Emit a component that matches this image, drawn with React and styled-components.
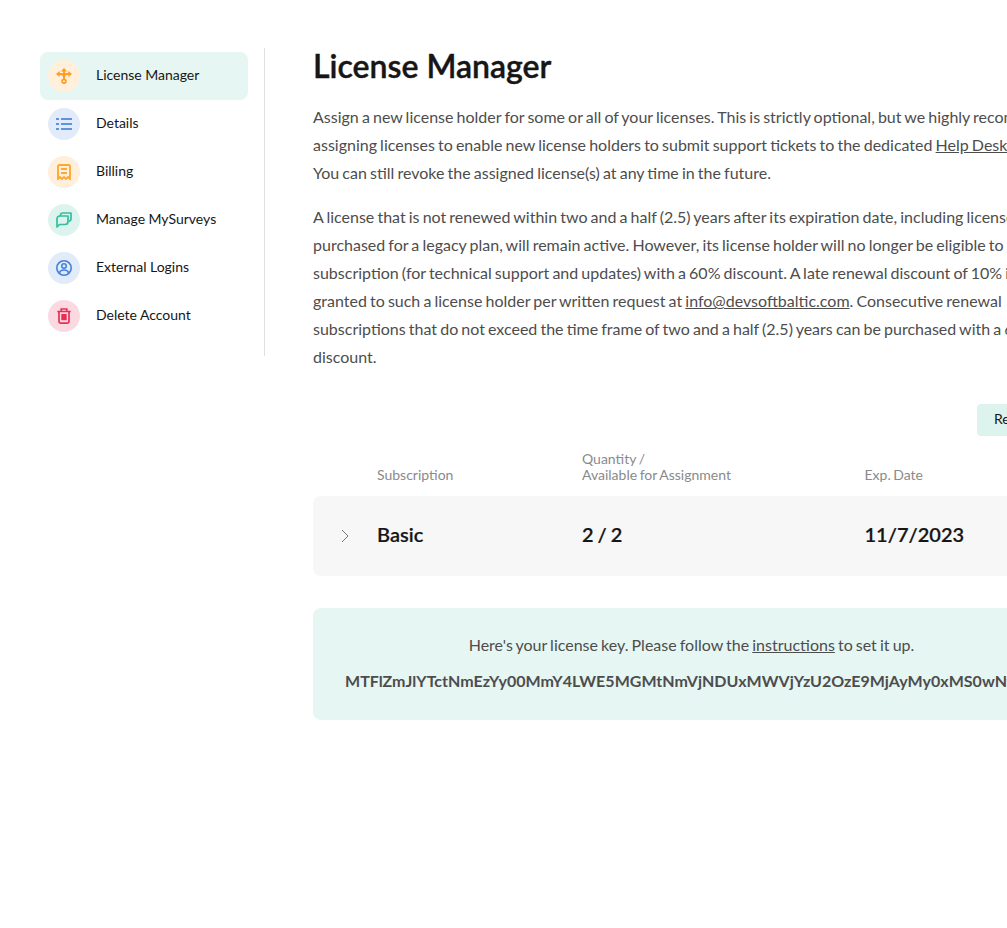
import React from "react";
import styled, { createGlobalStyle } from "styled-components";

const GlobalStyle = createGlobalStyle`
  * { box-sizing: border-box; }
  html, body { margin: 0; padding: 0; overflow: hidden; background: #fff; }
  body { font-family: Lato, "Liberation Sans", sans-serif; color: #161616; }
`;

const Page = styled.div`
  display: flex;
  align-items: flex-start;
  width: 1070px;
  min-height: 928px;
  padding: 48px 0 0 40px;
`;

const Sidebar = styled.nav`
  flex: none;
  width: 225px;
  height: 308px;
  padding: 4px 16px 0 0;
  border-right: 1px solid #e0e0e0;
`;

const NavItem = styled.a`
  display: flex;
  align-items: center;
  gap: 16px;
  height: 48px;
  padding: 0 8px;
  border-radius: 8px;
  background: ${(p) => (p.$active ? "#e6f6f3" : "transparent")};
`;

const IconCircle = styled.span`
  flex: none;
  display: flex;
  align-items: center;
  justify-content: center;
  width: 32px;
  height: 32px;
  border-radius: 50%;
  background: ${(p) => p.$bg};
  color: ${(p) => p.$fg};
`;

const NavLabel = styled.span`
  padding-bottom: 2px;
  font-size: 14px;
  line-height: 20px;
  word-spacing: -0.2px;
  white-space: nowrap;
`;

const Main = styled.main`
  flex: none;
  width: 757px;
  margin-left: 48px;
`;

const Title = styled.h1`
  margin: 0 0 19px;
  font-size: 32px;
  font-weight: 600;
  line-height: 36px;
  -webkit-text-stroke: 0.4px currentColor;
`;

const Paragraph = styled.p`
  margin: 0 0 16px;
  font-size: 16px;
  line-height: 28px;
  word-spacing: -0.98px;
  color: #4d4d4d;
  white-space: nowrap;
`;

const Link = styled.a`
  text-decoration: underline;
`;

const Actions = styled.div`
  display: flex;
  justify-content: flex-end;
  margin-top: 33px;
`;

const Button = styled.button`
  width: 93px;
  height: 32px;
  padding: 0 0 2px 17px;
  border: 0;
  border-radius: 4px;
  background: #ddf4ee;
  color: #161616;
  font: 14px/20px Lato, sans-serif;
  text-align: left;
`;

const GridRow = styled.div`
  display: grid;
  grid-template-columns: 64px 205px 282.5px 1fr;
`;

const TableHead = styled(GridRow)`
  align-items: end;
  margin-top: 15px;
  padding-bottom: 13px;
  font-size: 14px;
  line-height: 16px;
  word-spacing: -1px;
  color: #8a8a8a;
`;

const TableRow = styled(GridRow)`
  align-items: center;
  height: 80px;
  border-radius: 8px;
  background: #f7f7f7;
  font-size: 20px;
  font-weight: 600;
  line-height: 28px;
  word-spacing: -1px;
  -webkit-text-stroke: 0.2px currentColor;
`;

const Cell = styled.span`
  padding-bottom: 4px;
`;

const Toggle = styled.span`
  display: flex;
  justify-content: center;
  color: #777;
`;

const KeyPanel = styled.section`
  height: 112px;
  margin-top: 32px;
  padding: 23px 32px;
  border-radius: 8px;
  background: #e6f6f3;
  color: #4d4d4d;
  font-size: 16px;
  line-height: 28px;
  word-spacing: -1px;
  white-space: nowrap;
`;

const KeyHint = styled.div`
  text-align: center;
`;

const KeyValue = styled.div`
  margin-top: 8px;
  font-weight: 700;
  letter-spacing: 0.02px;
`;

const Svg = ({ children }) => (
  <svg width="16" height="16" viewBox="0 0 16 16" fill="none" stroke="currentColor" strokeWidth="2">
    {children}
  </svg>
);

const LicenseIcon = () => (
  <Svg>
    <path d="M8 3v8M2.500 6h2.200C6.500 6 8 7.200 8 9M13.500 6h-2.200C9.500 6 8 7.200 8 9" strokeWidth="1.900" />
    <path d="M8 0l3.200 3.600H4.800zM0 6l3.600-3v6zM16 6l-3.600-3v6z" fill="currentColor" stroke="none" />
    <circle cx="8" cy="13.200" r="1.900" strokeWidth="1.700" />
  </Svg>
);

const ListIcon = () => (
  <Svg>
    <path d="M0 3h3M5 3h11M0 8h3M5 8h11M0 13h3M5 13h11" />
  </Svg>
);

const BillIcon = () => (
  <Svg>
    <path d="M2 15V2.500Q2 1 3.500 1h9Q14 1 14 2.500V15l-2-2-2 2-2-2-2 2-2-2z" strokeWidth="1.900" />
    <path d="M5 5h6M5 9h6" strokeWidth="1.800" />
  </Svg>
);

const ChatIcon = () => (
  <Svg>
    <path d="M1 15V7Q1 4 4 4h8v5.500Q12 12.500 9 12.500H3.500z" strokeWidth="1.700" strokeLinejoin="round" />
    <path d="M4.500 4V3.200Q4.500 1 6.700 1H15v5.500q0 2.500-2.500 3" strokeWidth="1.700" strokeLinejoin="round" />
  </Svg>
);

const UserIcon = () => (
  <Svg>
    <circle cx="8" cy="8" r="7.200" strokeWidth="1.600" />
    <circle cx="8" cy="6" r="2.200" strokeWidth="1.600" />
    <path d="M3.500 13c.4-2 2-3 4.500-3s4.100 1 4.500 3" strokeWidth="1.600" />
  </Svg>
);

const TrashIcon = () => (
  <Svg>
    <path d="M1.300 3.500h13.400M5.200 3.500V1h5.600v2.500M3 3.500V13.600Q3 15.100 4.500 15.100h7q1.500 0 1.500-1.500V3.500" strokeWidth="1.700" />
    <path d="M5.300 6h5.400v6.200H5.300z" fill="currentColor" stroke="none" />
  </Svg>
);

const NAV = [
  { label: "License Manager", Icon: LicenseIcon, bg: "#ffefdb", fg: "#ff9d1f", active: true },
  { label: "Details", Icon: ListIcon, bg: "#e1ebf9", fg: "#5f93e1" },
  { label: "Billing", Icon: BillIcon, bg: "#ffefdb", fg: "#ffa733" },
  { label: "Manage MySurveys", Icon: ChatIcon, bg: "#ddf4ee", fg: "#35bd9e" },
  { label: "External Logins", Icon: UserIcon, bg: "#e1ebf9", fg: "#4581dc" },
  { label: "Delete Account", Icon: TrashIcon, bg: "#fbd9e0", fg: "#e82e55" },
];

export default function App() {
  return (
    <>
      <GlobalStyle />
      <Page>
        <Sidebar>
          {NAV.map(({ label, Icon, bg, fg, active }) => (
            <NavItem key={label} $active={active}>
              <IconCircle $bg={bg} $fg={fg}>
                <Icon />
              </IconCircle>
              <NavLabel>{label}</NavLabel>
            </NavItem>
          ))}
        </Sidebar>
        <Main>
          <Title>License Manager</Title>
          <Paragraph>
            Assign a new license holder for some or all of your licenses. This is strictly optional, but we highly recommend
            <br />
            assigning licenses to enable new license holders to submit support tickets to the dedicated <Link>Help Desk</Link>.
            <br />
            You can still revoke the assigned license(s) at any time in the future.
          </Paragraph>
          <Paragraph>
            A license that is not renewed within two and a half (2.5) years after its expiration date, including licenses
            <br />
            purchased for a legacy plan, will remain active. However, its license holder will no longer be eligible to renew a
            <br />
            subscription (for technical support and updates) with a 60% discount. A late renewal discount of 10% is
            <br />
            granted to such a license holder per written request at <Link>info@devsoftbaltic.com</Link>. Consecutive renewal
            <br />
            subscriptions that do not exceed the time frame of two and a half (2.5) years can be purchased with a 60%
            <br />
            discount.
          </Paragraph>
          <Actions>
            <Button>Renew</Button>
          </Actions>
          <TableHead>
            <span />
            <span>Subscription</span>
            <span>
              Quantity /<br />
              Available for Assignment
            </span>
            <span>Exp. Date</span>
          </TableHead>
          <TableRow>
            <Toggle>
              <svg width="16" height="16" viewBox="0 0 16 16" fill="none" stroke="currentColor">
                <path d="M5 2l6 6-6 6" />
              </svg>
            </Toggle>
            <Cell>Basic</Cell>
            <Cell>2 / 2</Cell>
            <Cell>11/7/2023</Cell>
          </TableRow>
          <KeyPanel>
            <KeyHint>
              Here's your license key. Please follow the <Link>instructions</Link> to set it up.
            </KeyHint>
            <KeyValue>MTFlZmJlYTctNmEzYy00MmY4LWE5MGMtNmVjNDUxMWVjYzU2OzE9MjAyMy0xMS0wNyw=</KeyValue>
          </KeyPanel>
        </Main>
      </Page>
    </>
  );
}
